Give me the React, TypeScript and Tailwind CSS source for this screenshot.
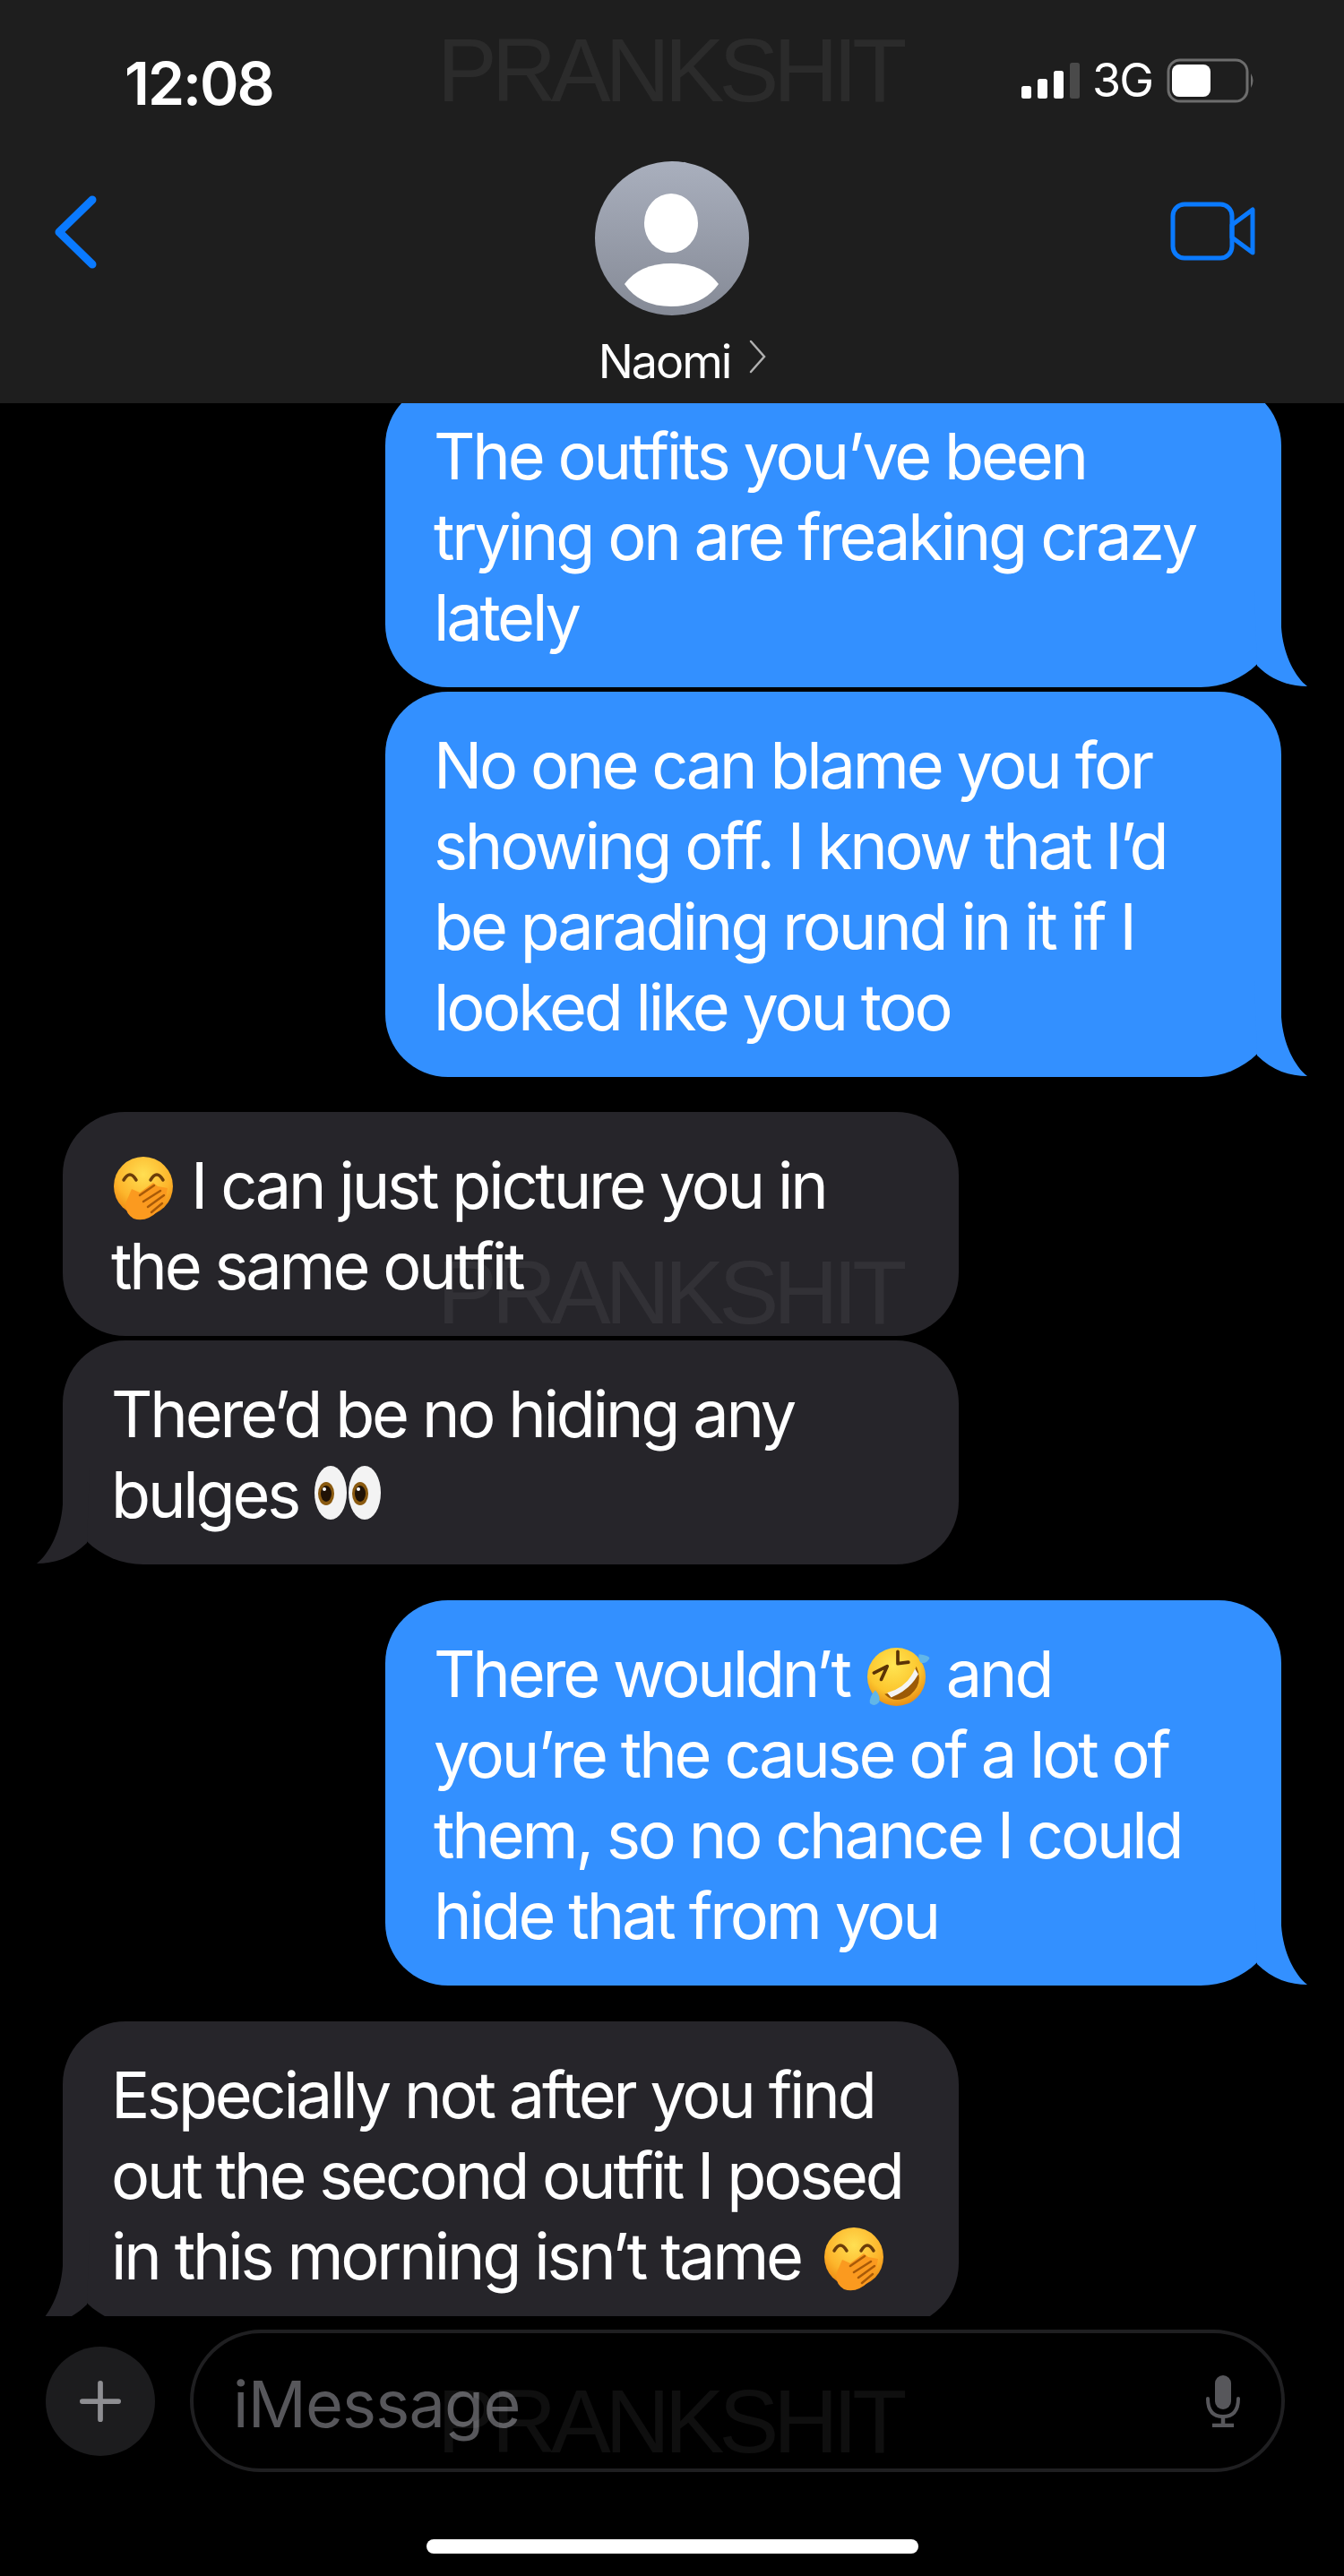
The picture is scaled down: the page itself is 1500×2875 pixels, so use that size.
import type { ReactNode } from "react";

function HandOverMouth({ className }: { className?: string }) {
  return (
    <svg viewBox="0 0 70 74" className={`inline-block h-[74px] w-[72px] align-[-14px] ${className ?? ""}`}>
      <defs>
        <radialGradient id="faceA" cx="50%" cy="30%" r="70%">
          <stop offset="0%" stopColor="#ffdf52" />
          <stop offset="65%" stopColor="#fdb52b" />
          <stop offset="100%" stopColor="#ee8a12" />
        </radialGradient>
      </defs>
      <circle cx="35" cy="35" r="33" fill="url(#faceA)" />
      <path d="M13 28 Q20 16 27 28" fill="none" stroke="#6b3d0a" strokeWidth="3.5" strokeLinecap="round" />
      <path d="M43 28 Q50 16 57 28" fill="none" stroke="#6b3d0a" strokeWidth="3.5" strokeLinecap="round" />
      <path d="M16 52 L22 38 L31 42 L46 31 L51 35 L62 37 L60 48 L52 62 Q38 76 24 71 Q13 64 16 52 Z" fill="#fb9a1f" />
      <path d="M31 45 L47 34 M35 52 L54 40 M40 58 L58 45 M44 64 L56 54" stroke="#a85a08" strokeWidth="2.5" strokeLinecap="round" />
    </svg>
  );
}

function RoflEmoji() {
  return (
    <svg viewBox="0 0 100 100" className="inline-block h-[74px] w-[74px] align-[-13px]">
      <defs>
        <radialGradient id="faceB" cx="45%" cy="30%" r="70%">
          <stop offset="0%" stopColor="#ffe552" />
          <stop offset="65%" stopColor="#fcc62e" />
          <stop offset="100%" stopColor="#e98f16" />
        </radialGradient>
      </defs>
      <circle cx="48" cy="52" r="44" fill="url(#faceB)" />
      <path d="M14 46 L34 36 L25 56 M50 14 L50 32 L66 30" fill="none" stroke="#5b3306" strokeWidth="5" strokeLinejoin="round" strokeLinecap="round" />
      <path d="M30 78 Q66 72 78 36 Q90 62 68 80 Q46 94 30 78 Z" fill="#9c5a06" />
      <path d="M34 76 Q64 68 76 40 L81 48 Q68 72 40 83 Z" fill="#f4f4f4" />
      <path d="M82 18 Q97 20 98 24 Q92 34 84 30 Q80 24 82 18 Z" fill="#62b6e8" />
      <path d="M16 72 Q6 84 8 92 Q16 98 22 90 Q24 80 16 72 Z" fill="#62b6e8" />
    </svg>
  );
}

function EyesEmoji() {
  return (
    <svg viewBox="0 0 76 62" className="inline-block h-[62px] w-[76px] align-[-3px]">
      <ellipse cx="19" cy="31" rx="18" ry="30" fill="#f3f3f3" />
      <ellipse cx="57" cy="31" rx="18" ry="30" fill="#f3f3f3" />
      <ellipse cx="14" cy="32" rx="9" ry="13" fill="#8a5a10" />
      <ellipse cx="52" cy="32" rx="9" ry="13" fill="#8a5a10" />
      <ellipse cx="14" cy="32" rx="6" ry="9" fill="#1f1206" />
      <ellipse cx="52" cy="32" rx="6" ry="9" fill="#1f1206" />
      <circle cx="12" cy="27" r="2" fill="#fff" />
      <circle cx="50" cy="27" r="2" fill="#fff" />
    </svg>
  );
}

function Bubble({ lines, mine, tail, className }: { lines: ReactNode[]; mine?: boolean; tail?: boolean; className?: string }) {
  const fill = mine ? "#3390ff" : "#26252a";
  const corner = tail ? (mine ? "rounded-br-[90px]" : "rounded-bl-[90px]") : "";
  return (
    <div
      className={`relative w-[1000px] rounded-[70px] pb-[33px] pl-[54px] pr-[55px] pt-[37px] text-[72px] leading-[90px] tracking-[-3.2px] text-white ${corner} ${
        mine ? "self-end bg-[#3390ff]" : "self-start bg-[#26252a]"
      } ${className ?? ""}`}
    >
      {lines.map((line, i) => (
        <div key={i} className="whitespace-nowrap">
          {line}
        </div>
      ))}
      {tail && (
        <svg
          viewBox="0 0 60 107"
          className={`absolute bottom-0 h-[107px] w-[60px] ${mine ? "right-[-30px]" : "left-[-30px] -scale-x-100"}`}
        >
          <path d="M0 0 L30 0 L30 40 C32 70 45 95 59 106 C40 106 20 100 3 83 Z" fill={fill} />
        </svg>
      )}
    </div>
  );
}

function Watermark({ className }: { className: string }) {
  return (
    <div
      className={`pointer-events-none absolute left-[488px] font-['Liberation_Sans',sans-serif] text-[100px] leading-[100px] tracking-[-6px] text-white/[0.06] ${className}`}
    >
      PRANKSHIT
    </div>
  );
}

export default function App() {
  return (
    <div className="relative flex h-[2875px] w-[1500px] flex-col overflow-hidden bg-black font-['Inter',sans-serif]">
      {/* top bars */}
      <div className="h-[450px] shrink-0 bg-[#1e1e1e]">
        <div className="flex h-[180px] items-center justify-between pl-[139px] pr-[98px] text-white">
          <span className="mt-[6px] text-[66px] font-semibold tracking-[-2px]">12:08</span>
          <div className="flex items-center">
            <svg viewBox="0 0 66 40" className="mr-[13px] h-[40px] w-[66px]">
              <rect x="0" y="26" width="11" height="14" rx="2.5" fill="#fff" />
              <rect x="18" y="18" width="11" height="22" rx="2.5" fill="#fff" />
              <rect x="36" y="9" width="11" height="31" rx="2.5" fill="#fff" />
              <rect x="54" y="0" width="11" height="40" rx="2.5" fill="#4a4a4a" />
            </svg>
            <span className="mr-[16px] text-[52px] font-normal tracking-[-2px]">3G</span>
            <svg viewBox="0 0 100 50" className="h-[50px] w-[100px]">
              <rect x="2" y="2" width="88" height="46" rx="13" fill="none" stroke="#6d6d6d" strokeWidth="3" />
              <rect x="6" y="7" width="43" height="36" rx="8" fill="#fff" />
              <path d="M94 17 Q99 25 94 33 Z" fill="#6d6d6d" />
            </svg>
          </div>
        </div>
        <div className="grid h-[270px] grid-cols-[1fr_auto_1fr]">
          <div className="pl-[60px] pt-[38px]">
            <svg viewBox="0 0 50 82" className="h-[82px] w-[50px]">
              <path d="M43 5 L6 41 L43 77" fill="none" stroke="#0a7aff" strokeWidth="9" strokeLinecap="round" strokeLinejoin="round" />
            </svg>
          </div>
          <div className="flex flex-col items-center">
            <svg viewBox="0 0 172 172" className="h-[172px] w-[172px]">
              <defs>
                <linearGradient id="avatarBg" x1="0" y1="0" x2="0" y2="1">
                  <stop offset="0%" stopColor="#a9afbd" />
                  <stop offset="100%" stopColor="#858a96" />
                </linearGradient>
              </defs>
              <circle cx="86" cy="86" r="86" fill="url(#avatarBg)" />
              <ellipse cx="85" cy="69" rx="30" ry="33" fill="#fff" />
              <path d="M33 137 Q50 114 85 114 Q120 114 138 137 Q120 162 85 162 Q50 162 33 137 Z" fill="#fff" />
            </svg>
            <div className="mt-[22px] flex items-start pl-[24px] text-white">
              <span className="text-[52px] font-normal leading-[60px] tracking-[-2px]">Naomi</span>
              <svg viewBox="0 0 20 38" className="ml-[21px] mt-[5px] h-[38px] w-[20px]">
                <path d="M2 2 L17 19 L2 36" fill="none" stroke="#b0b0b0" strokeWidth="2.5" strokeLinecap="round" />
              </svg>
            </div>
          </div>
          <div className="flex justify-end pr-[98px] pt-[45px]">
            <svg viewBox="0 0 96 66" className="h-[66px] w-[96px]">
              <rect x="3" y="3" width="66" height="60" rx="13" fill="none" stroke="#0a7aff" strokeWidth="5" />
              <path d="M69 26 L92 9 L92 57 L69 40 Z" fill="none" stroke="#0a7aff" strokeWidth="5" strokeLinejoin="round" />
            </svg>
          </div>
        </div>
      </div>

      {/* messages */}
      <div className="flex h-[2135px] shrink-0 flex-col overflow-hidden pl-[70px] pr-[70px]">
        <Bubble mine tail className="mt-[-23px]" lines={["The outfits you’ve been", "trying on are freaking crazy", "lately"]} />
        <Bubble
          mine
          tail
          className="mt-[5px]"
          lines={["No one can blame you for", "showing off. I know that I’d", "be parading round in it if I", "looked like you too"]}
        />
        <Bubble
          className="mt-[39px]"
          lines={[
            <>
              <HandOverMouth /> I can just picture you in
            </>,
            "the same outfit",
          ]}
        />
        <Bubble
          tail
          className="mt-[5px]"
          lines={[
            "There’d be no hiding any",
            <>
              bulges <EyesEmoji />
            </>,
          ]}
        />
        <Bubble
          mine
          tail
          className="mt-[40px]"
          lines={[
            <>
              There wouldn’t <RoflEmoji /> and
            </>,
            "you’re the cause of a lot of",
            "them, so no chance I could",
            "hide that from you",
          ]}
        />
        <Bubble
          tail
          className="mt-[40px] shrink-0"
          lines={[
            "Especially not after you find",
            "out the second outfit I posed",
            <>
              in this morning isn’t tame <HandOverMouth className="ml-[6px]" />
            </>,
          ]}
        />
      </div>

      {/* input */}
      <div className="flex items-center gap-[39px] pl-[51px] pt-[15px]">
        <div className="flex h-[122px] w-[122px] items-center justify-center rounded-full bg-[#1c1c1e]">
          <svg viewBox="0 0 48 48" className="h-[46px] w-[46px]">
            <path d="M24 3 V45 M3 24 H45" stroke="#8e8e92" strokeWidth="6" strokeLinecap="round" />
          </svg>
        </div>
        <div className="flex h-[159px] w-[1222px] items-center justify-between rounded-[80px] border-[4px] border-[#1f1f21] pl-[44px] pr-[45px]">
          <span className="mt-[7px] text-[72px] tracking-[-0.8px] text-[#57575b]">iMessage</span>
          <svg viewBox="0 0 40 58" className="h-[58px] w-[40px]">
            <rect x="11" y="0" width="18" height="38" rx="9" fill="#57575b" />
            <path d="M3 26 Q3 46 20 46 Q37 46 37 26" fill="none" stroke="#57575b" strokeWidth="4" strokeLinecap="round" />
            <path d="M20 46 V54 M8 56 H32" stroke="#57575b" strokeWidth="4.5" />
          </svg>
        </div>
      </div>
      <div className="mx-auto mt-[75px] h-[16px] w-[549px] rounded-full bg-white" />

      <Watermark className="top-[28px]" />
      <Watermark className="top-[1392px]" />
      <Watermark className="top-[2652px]" />
    </div>
  );
}
